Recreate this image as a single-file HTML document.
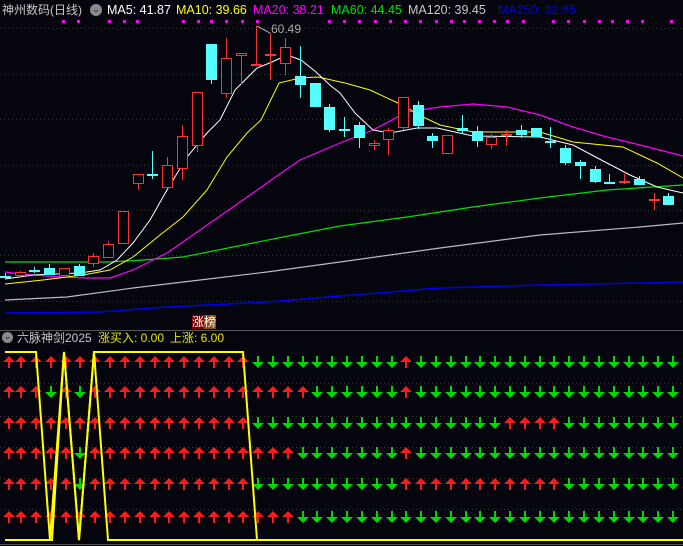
<!DOCTYPE html>
<html><head><meta charset="utf-8"><style>
html,body{margin:0;padding:0;background:#05050d;width:683px;height:546px;overflow:hidden}
.t{position:absolute;font-family:"Liberation Sans","Noto Sans CJK SC",sans-serif;font-size:12.5px;white-space:nowrap;line-height:14px}
</style></head><body>
<svg id="s" width="683" height="546" style="position:absolute;left:0;top:0" xmlns="http://www.w3.org/2000/svg"></svg>
<div class="t" style="left:2px;top:3px;color:#c8c8c8;font-size:12px">神州数码(日线)</div>
<div style="position:absolute;left:90px;top:4px;width:12px;height:12px;border-radius:6px;background:#8a8a8a;color:#222;font-size:9px;text-align:center;line-height:12px;font-family:'DejaVu Sans',sans-serif">⌄</div>
<div class="t" style="left:107px;top:3px;color:#fff">MA5: 41.87</div>
<div class="t" style="left:176px;top:3px;color:#ffff00">MA10: 39.66</div>
<div class="t" style="left:253px;top:3px;color:#ff00ff">MA20: 38.21</div>
<div class="t" style="left:331px;top:3px;color:#00e000">MA60: 44.45</div>
<div class="t" style="left:408px;top:3px;color:#c8c8c8">MA120: 39.45</div>
<div class="t" style="left:498px;top:3px;color:#0000ee">MA250: 32.85</div>
<div class="t" style="left:271px;top:22px;color:#aaa;font-size:12px">60.49</div>
<div class="t" style="left:192px;top:315px;color:#fff;font-size:12px;background:#7a0000;width:12px">涨</div>
<div class="t" style="left:204px;top:315px;color:#fff;font-size:12px;background:#8b4a10;width:12px">榜</div>
<div style="position:absolute;left:2px;top:332px;width:11px;height:11px;border-radius:6px;background:#8a8a8a;color:#222;font-size:9px;text-align:center;line-height:11px;font-family:'DejaVu Sans',sans-serif">⌄</div>
<div class="t" style="left:17px;top:331px;color:#c8c8c8;font-size:12px">六脉神剑2025</div>
<div class="t" style="left:98px;top:331px;color:#e6e600;font-size:12px">涨买入: 0.00</div>
<div class="t" style="left:170px;top:331px;color:#e6e600;font-size:12px">上涨: 6.00</div>
<script>
var s=document.getElementById('s'),h='';
function X(i){return 5+14.74*i}
[28,74,119,165,210,255,301].forEach(function(y){h+='<line x1="0" x2="683" y1="'+y+'.5" y2="'+y+'.5" stroke="#3a3a3a" stroke-dasharray="1,3"/>'});
[383,416,447,478,509].forEach(function(y){h+='<line x1="0" x2="683" y1="'+y+'.5" y2="'+y+'.5" stroke="#3a3a3a" stroke-dasharray="1,3"/>'});
h+='<line x1="0" x2="683" y1="330.5" y2="330.5" stroke="#555"/><line x1="0" x2="683" y1="544.5" y2="544.5" stroke="#555"/>';
[63,78,109,124,137,183,198,211,226,242,257,329,344,359,375,390,405,420,436,451,464,479,494,507,523,553,568,584,599,612,627,642,671].forEach(function(x){h+='<rect x="'+(x-1)+'" y="20" width="3" height="3" fill="#ff00ff"/>'});
function pl(p,c,w){h+='<polyline fill="none" stroke="'+c+'" stroke-width="'+(w||1)+'" points="'+p+'"/>'}
pl("5,313 100,312 167,307 267,302 340,296 440,288 540,285 640,283 683,282","#0000ee",1.5);
pl("5,300 67,297 133,288 200,280 267,272 340,262 440,248 540,235 640,227 683,223","#bbbbbb",1.2);
pl("5,262 110,262 143,260 183,257 233,247 283,237 340,226 407,217 473,207 540,198 607,190 683,185","#00e000",1.2);
pl("5,272 20,274 60,277 87,278 110,278 133,270 167,253 200,230 233,207 267,183 300,160 340,143 373,130 407,112 440,107 473,104 507,107 540,115 573,127 607,137 640,145 683,156","#ff00ff",1.2);
pl("5,284 43,280 83,275 110,270 133,257 160,235 183,217 207,190 227,157 247,133 261,120 279,83 300,78 318,77 345,83 370,90 400,104 423,117 440,125 473,132 540,132 573,142 623,147 657,163 683,178","#ffff00",1);
pl("5,279 33,275 80,273 100,270 117,260 133,243 150,220 167,190 187,157 207,133 220,120 235,90 257,68 272,62 287,55 301,60 316,72 331,86 340,93 355,113 373,130 390,133 417,128 437,128 473,136 540,137 573,145 607,163 630,175 657,187 683,193","#ffffff",1);
h+='<line x1="257" y1="26" x2="270" y2="33" stroke="#aaa"/>';
var C=[[0,276,276,273,279,'c'],[1,272,276,271,278,'r'],[2,270,270,267,273,'c'],[3,268,275,264,275,'c'],[4,268,276,268,276,'r'],[5,266,276,264,276,'c'],[6,256,264,253,267,'r'],[7,244,258,241,258,'r'],[8,211,244,211,244,'r'],[9,174,184,174,190,'r'],[10,174,174,151,179,'c'],[11,165,188,157,188,'r'],[12,136,169,125,180,'r'],[13,92,146,92,152,'r'],[14,44,80,44,84,'c'],[15,58,94,38,98,'r'],[16,53,56,53,84,'r'],[17,64,64,26,65,'r'],[18,54,54,33,80,'r'],[19,47,64,38,75,'r'],[20,76,85,46,98,'c'],[21,83,107,83,107,'c'],[22,107,130,104,132,'c'],[23,129,129,117,137,'c'],[24,125,138,122,148,'c'],[25,143,146,140,150,'r'],[26,130,140,128,155,'r'],[27,97,128,97,130,'r'],[28,105,126,101,129,'c'],[29,136,141,133,148,'c'],[30,135,154,135,154,'r'],[31,128,131,115,134,'c'],[32,131,141,126,147,'c'],[33,137,145,134,149,'r'],[34,134,136,130,146,'r'],[35,130,135,125,138,'c'],[36,128,137,128,137,'c'],[37,141,141,127,148,'c'],[38,148,163,145,165,'c'],[39,162,166,160,179,'c'],[40,169,182,166,183,'c'],[41,182,182,174,182,'c'],[42,181,181,174,184,'r'],[43,179,185,176,184,'c'],[44,199,201,193,210,'r'],[45,196,205,193,205,'c'],[46.5,202,205,202,205,'c']];
C.forEach(function(c){var x=Math.round(X(c[0])),col=c[5]=='r'?'#ff3232':'#54ffff';
h+='<line x1="'+(x+.5)+'" x2="'+(x+.5)+'" y1="'+c[3]+'" y2="'+c[4]+'" stroke="'+col+'"/>';
var hgt=c[2]-c[1];
if(hgt<2){h+='<rect x="'+(x-5)+'" y="'+c[1]+'" width="11" height="2" fill="'+col+'"/>'}
else if(c[5]=='r'){h+='<rect x="'+(x-4.5)+'" y="'+(c[1]+.5)+'" width="10" height="'+(hgt-1)+'" fill="#05050d" stroke="'+col+'"/>'}
else{h+='<rect x="'+(x-5)+'" y="'+c[1]+'" width="11" height="'+hgt+'" fill="'+col+'"/>'}});
var rows=[362,392,423,453,484,517];
function up(r,i){
 if(r==0){if(i==27)return 1;return i<=16}
 if(r==1){if(i==3||i==5)return 0;if(i==27)return 1;return i<=20}
 if(r==2){if(i>=34&&i<=37)return 1;return i<=16}
 if(r==3){if(i==5)return 0;if(i==27)return 1;return i<=19}
 if(r==4){if(i==5)return 0;if(i>=27&&i<=37)return 1;return i<=16}
 if(r==5){return i<=19}
}
for(var r=0;r<6;r++)for(var i=0;i<46;i++){var x=Math.round(i==0?9:i==1?21:36+(673-36)/43*(i-2)),y=rows[r];
 if(up(r,i))h+='<path fill="#ff1a1a" d="M'+x+' '+(y-6)+'l6 6h-5v6h-2v-6h-5z"/>';
 else h+='<path fill="#00d800" d="M'+x+' '+(y+6)+'l6 -6h-5v-6h-2v6h-5z"/>';}
pl("5,540 50,540 52,540 64,352 79,540 94,352 108,540 683,540","#ffff00",2);
pl("5,352 36,352 50,540 64,352 79,540 94,352 243,352 257,540","#ffff00",2);
s.innerHTML=h;
</script>
</body></html>
